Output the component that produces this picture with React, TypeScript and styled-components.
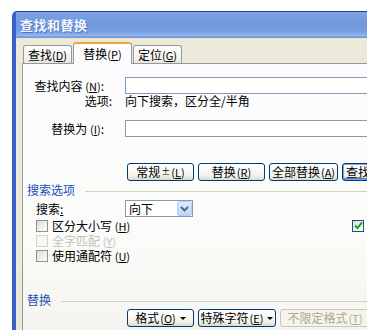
import React from 'react';
import styled, { createGlobalStyle } from 'styled-components';

const GlobalStyle = createGlobalStyle`
  html, body {
    margin: 0;
    padding: 0;
    background: #ffffff;
    overflow: hidden;
  }
  body {
    font-family: "Noto Sans CJK SC", "Noto Sans", sans-serif;
    font-size: 12px;
    line-height: 14px;
    color: #000;
  }
`;

// Helpers
const Key = ({ k }: { k: string }) => (
  <Acc>
    (<u>{k}</u>)
  </Acc>
);

const App = () => {
  return (
    <>
      <GlobalStyle />
      <Page>
        <Window>
          <TitleBar>查找和替换</TitleBar>
          <Client>
            <TabStrip>
              <Tab>
                查找 <Key k='D' />
              </Tab>
              <Tab active>
                替换 <Key k='P' />
              </Tab>
              <Tab>
                定位 <Key k='G' />
              </Tab>
            </TabStrip>
            <Panel>
              <FieldRow top={13}>
                <Label>
                  查找内容 <Key k='N' />:
                </Label>
                <TextBox />
              </FieldRow>
              <FieldRow top={0} short>
                <Label shift={-8}>选项:</Label>
                <span>向下搜索，区分全/半角</span>
              </FieldRow>
              <FieldRow top={12}>
                <Label>
                  替换为 <Key k='I' />:
                </Label>
                <TextBox />
              </FieldRow>

              <ButtonRow top={26}>
                <Button width={67}>
                  常规 <Small>±</Small> <Key k='L' />
                </Button>
                <Button width={67}>
                  替换 <Key k='R' />
                </Button>
                <Button width={69}>
                  全部替换 <Key k='A' />
                </Button>
                <Button width={60} primary start>
                  查找
                </Button>
              </ButtonRow>

              <SectionHeader top={2}>
                <span>搜索选项</span>
                <Rule />
              </SectionHeader>

              <SearchRow>
                <SearchLabel>
                  搜索<u>:</u>
                </SearchLabel>
                <Select>
                  <span>向下</span>
                  <SelectArrow>
                    <svg width='9' height='6' viewBox='0 0 9 6'>
                      <path d='M1 1 L4.5 4.5 L8 1' fill='none' stroke='#4d6185' strokeWidth='1.8' />
                    </svg>
                  </SelectArrow>
                </Select>
              </SearchRow>

              <OptionsGrid>
                <div>
                  <CheckRow>
                    <Box />
                    <span>
                      区分大小写 <Key k='H' />
                    </span>
                  </CheckRow>
                  <CheckRow disabled>
                    <Box disabled />
                    <span>
                      全字匹配 <Key k='Y' />
                    </span>
                  </CheckRow>
                  <CheckRow>
                    <Box />
                    <span>
                      使用通配符 <Key k='U' />
                    </span>
                  </CheckRow>
                </div>
                <div>
                  <CheckRow>
                    <Box checked>
                      <svg width='9' height='9' viewBox='0 0 9 9'>
                        <path d='M1 4.5 L3.5 7 L8 1.5' fill='none' stroke='#21a121' strokeWidth='2' />
                      </svg>
                    </Box>
                  </CheckRow>
                </div>
              </OptionsGrid>

              <SectionHeader top={30}>
                <span>替换</span>
                <Rule />
              </SectionHeader>

              <ButtonRow top={2}>
                <Button width={67}>
                  格式 <Key k='O' /> <Caret />
                </Button>
                <Button width={78}>
                  特殊字符 <Key k='E' /> <Caret />
                </Button>
                <Button width={90} disabled>
                  不限定格式 <Key k='T' />
                </Button>
              </ButtonRow>
            </Panel>
          </Client>
        </Window>
      </Page>
    </>
  );
};

// Styled
const Page = styled.div`
  padding: 11px 0 0 12px;
  width: 420px;
`;

const Window = styled.div`
  width: 400px;
  height: 330px;
  display: flex;
  flex-direction: column;
  background: #ece9d8;
  border-left: 4px solid #3b62c6;
  border-top: 1px solid #1d3f95;
  border-top-left-radius: 5px;
`;

const TitleBar = styled.div`
  height: 26px;
  flex: none;
  display: flex;
  align-items: center;
  padding-left: 4px;
  background: linear-gradient(#7ea2e2 0%, #7098de 45%, #759de0 75%, #93b4ec 90%, #6a8fd6 100%);
  color: #f4f7ff;
  font-size: 13px;
  font-weight: bold;
  letter-spacing: 0.5px;
  text-shadow: 1px 1px 0 #5077c4;
`;

const Client = styled.div`
  flex: 1;
  display: flex;
  flex-direction: column;
  padding: 4px 0 0 6px;
  background: #ece9d8;
`;

const TabStrip = styled.div`
  height: 21px;
  flex: none;
  display: flex;
  align-items: flex-end;
  gap: 2px;
  border-bottom: 1px solid #919b9c;
  padding-left: 1px;
`;

const Tab = styled.div<{ active?: boolean }>`
  position: relative;
  display: flex;
  align-items: center;
  justify-content: center;
  box-sizing: border-box;
  padding: 0 6px;
  border: 1px solid #919b9c;
  border-bottom: none;
  border-radius: 3px 3px 0 0;
  white-space: nowrap;
  ${({ active }) =>
    active
      ? `
    height: 22px;
    margin-bottom: -1px;
    margin-left: -1px;
    margin-right: -1px;
    width: 59px;
    background: #fcfcfe;
    border-top: 2px solid #f2a33a;
  `
      : `
    height: 18px;
    width: 49px;
    background: linear-gradient(#ffffff, #f1f0ea 80%, #e6e4da);
  `}
`;

const Acc = styled.span`
  font-size: 11px;
`;

const Small = styled.span`
  font-size: 9px;
`;

const Panel = styled.div`
  flex: 1;
  border-left: 1px solid #919b9c;
  background: linear-gradient(#fcfcfe, #fbfbf9 60%, #f4f3ee);
`;

const FieldRow = styled.div<{ top: number; short?: boolean }>`
  display: flex;
  align-items: center;
  margin-top: ${({ top }) => top}px;
  height: ${({ short }) => (short ? 14 : 17)}px;
  white-space: nowrap;
`;

const Label = styled.div<{ shift?: number }>`
  width: 102px;
  flex: none;
  box-sizing: border-box;
  text-align: right;
  padding-right: ${({ shift }) => 21 + (shift || 0)}px;
`;

const TextBox = styled.div`
  flex: 1;
  height: 17px;
  box-sizing: border-box;
  border: 1px solid #7f9db9;
  background: #ffffff;
`;

const ButtonRow = styled.div<{ top: number }>`
  display: flex;
  gap: 4px;
  margin-top: ${({ top }) => top}px;
  padding-left: 104px;
  height: 18px;
`;

const Button = styled.div<{ width: number; primary?: boolean; disabled?: boolean; start?: boolean }>`
  width: ${({ width }) => width}px;
  flex: none;
  height: 18px;
  box-sizing: border-box;
  display: flex;
  align-items: center;
  justify-content: ${({ start }) => (start ? 'flex-start' : 'center')};
  padding-left: ${({ start }) => (start ? 3 : 0)}px;
  gap: 1px;
  white-space: nowrap;
  border-radius: 3px;
  border: 1px solid ${({ disabled }) => (disabled ? '#c9c7ba' : '#003c74')};
  background: ${({ disabled }) =>
    disabled ? '#f5f4ea' : 'linear-gradient(#ffffff, #f4f3ee 70%, #dcd9cc)'};
  color: ${({ disabled }) => (disabled ? '#aca899' : '#000')};
  box-shadow: ${({ primary }) => (primary ? 'inset 0 0 0 1px #7fa2e0, inset 0 -1px 0 1px #4d7bd0' : 'none')};
`;

const Caret = styled.span`
  display: inline-block;
  margin-left: 3px;
  border-left: 3px solid transparent;
  border-right: 3px solid transparent;
  border-top: 3px solid #000;
`;

const SectionHeader = styled.div<{ top: number }>`
  display: flex;
  align-items: center;
  gap: 10px;
  margin-top: ${({ top }) => top}px;
  height: 14px;
  padding-left: 4px;
  color: #1c4fb6;
`;

const Rule = styled.div`
  flex: 1;
  height: 1px;
  background: #d0d0bf;
  margin-top: 3px;
`;

const SearchRow = styled.div`
  display: flex;
  align-items: center;
  margin-top: 3px;
  height: 17px;
`;

const SearchLabel = styled.div`
  width: 102px;
  flex: none;
  box-sizing: border-box;
  padding-left: 13px;
`;

const Select = styled.div`
  width: 68px;
  height: 17px;
  box-sizing: border-box;
  border: 1px solid #7f9db9;
  background: #ffffff;
  display: flex;
  align-items: center;
  justify-content: space-between;
  padding-left: 3px;
`;

const SelectArrow = styled.div`
  width: 15px;
  height: 15px;
  box-sizing: border-box;
  border: 1px solid #b9cdf5;
  border-radius: 2px;
  background: linear-gradient(#dfe9fd, #c1d3fb);
  display: flex;
  align-items: center;
  justify-content: center;
`;

const OptionsGrid = styled.div`
  display: grid;
  grid-template-columns: 316px auto;
  margin-top: 1px;
  padding-left: 13px;
`;

const CheckRow = styled.div<{ disabled?: boolean }>`
  display: flex;
  align-items: center;
  gap: 4px;
  height: 15px;
  line-height: 15px;
  white-space: nowrap;
  color: ${({ disabled }) => (disabled ? '#c4c2b6' : '#000')};
`;

const Box = styled.div<{ checked?: boolean; disabled?: boolean }>`
  width: 12px;
  height: 12px;
  box-sizing: border-box;
  display: flex;
  align-items: center;
  justify-content: center;
  border: 1px solid ${({ disabled, checked }) => (disabled ? '#d8d6cb' : checked ? '#1c5180' : '#8e8f8f')};
  background: ${({ disabled }) =>
    disabled ? '#f6f6f2' : 'linear-gradient(135deg, #dcdcd7, #ffffff)'};
`;

export default App;
